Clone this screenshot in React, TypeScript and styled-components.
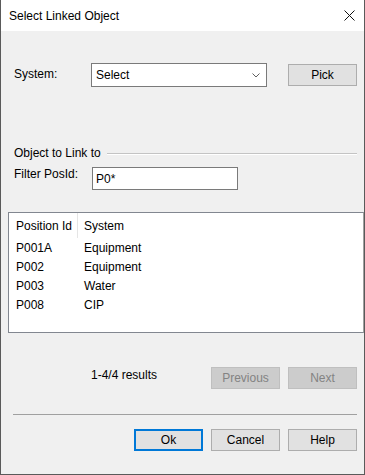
import styled, { createGlobalStyle } from "styled-components";

const GlobalStyle = createGlobalStyle`
  html, body {
    margin: 0;
    padding: 0;
    background: #ffffff;
  }
  * {
    box-sizing: border-box;
  }
`;

// Ventana del diálogo
const Window = styled.div`
  width: 365px;
  height: 475px;
  display: flex;
  flex-direction: column;
  border: 1px solid #5a5a5a;
  border-top: none;
  font-family: "Segoe UI", "Liberation Sans", Arial, sans-serif;
  font-size: 12px;
  color: #000;
  background: #f0f0f0;
`;

const TitleBar = styled.div`
  height: 31px;
  background: #ffffff;
  display: flex;
  align-items: center;
  padding-left: 8px;
  padding-right: 9px;
  font-size: 12px;
`;

const TitleText = styled.span`
  flex: 1;
  padding-top: 1px;
`;

const CloseIcon = () => (
  <svg width="11" height="11" viewBox="0 0 11 11">
    <path d="M0.5 0.5 L10.5 10.5 M10.5 0.5 L0.5 10.5" stroke="#111" strokeWidth="1" fill="none" />
  </svg>
);

const Body = styled.div`
  flex: 1;
  display: flex;
  flex-direction: column;
  padding-top: 32px;
`;

// Filas del formulario
const FormRow = styled.div<{ $top: number }>`
  display: flex;
  align-items: flex-start;
  margin-top: ${(p) => p.$top}px;
  padding: 0 7px 0 13px;
`;

const Label = styled.div<{ $width: number; $pad: number }>`
  width: ${(p) => p.$width}px;
  flex-shrink: 0;
  line-height: 15px;
  padding-top: ${(p) => p.$pad}px;
`;

const ComboBox = styled.div`
  width: 176px;
  height: 24px;
  background: #fff;
  border: 1px solid #7a7a7a;
  display: flex;
  align-items: center;
  padding: 0 6px 0 4px;
`;

const ComboText = styled.span`
  flex: 1;
`;

const Chevron = () => (
  <svg width="8" height="5" viewBox="0 0 8 5">
    <path d="M0.5 0.5 L4 4 L7.5 0.5" stroke="#606060" strokeWidth="1" fill="none" />
  </svg>
);

const TextInput = styled.div`
  width: 146px;
  height: 23px;
  margin-top: 1px;
  background: #fff;
  border: 1px solid #7a7a7a;
  display: flex;
  align-items: center;
  padding-left: 3px;
`;

const Button = styled.button<{ $disabled?: boolean; $default?: boolean }>`
  width: 69px;
  height: 22px;
  padding: 0;
  font-family: inherit;
  font-size: 12px;
  background: ${(p) => (p.$disabled ? "#cccccc" : "#e1e1e1")};
  color: ${(p) => (p.$disabled ? "#838383" : "#000")};
  border: ${(p) => (p.$default ? "2px solid #0078d7" : p.$disabled ? "1px solid #bfbfbf" : "1px solid #adadad")};
  border-radius: 0;
`;

const PickButton = styled(Button)`
  margin-left: auto;
  margin-top: 1px;
`;

// Encabezado de grupo con línea
const GroupHeader = styled.div`
  display: flex;
  align-items: center;
  margin-top: 59px;
  padding: 0 7px 0 13px;
  line-height: 15px;
`;

const GroupLine = styled.div`
  flex: 1;
  margin-left: 6px;
  border-top: 1px solid #c4c4c4;
  border-bottom: 1px solid #ffffff;
`;

// Lista de resultados
const ListBox = styled.div`
  margin: 22px 0 0 7px;
  height: 121px;
  background: #fff;
  border: 1px solid #828790;
  border-right: 1px solid #a0a0a0;
`;

const ListRow = styled.div<{ $header?: boolean }>`
  display: flex;
  height: ${(p) => (p.$header ? 25 : 19)}px;
  align-items: center;
`;

const IdCell = styled.div<{ $header?: boolean }>`
  width: 69px;
  height: 100%;
  display: flex;
  align-items: center;
  padding-left: 7px;
  border-right: 1px solid ${(p) => (p.$header ? "#e5e5e5" : "transparent")};
`;

const SystemCell = styled.div`
  padding-left: 6px;
`;

const ResultsRow = styled.div`
  display: flex;
  align-items: flex-start;
  gap: 8px;
  margin-top: 34px;
  padding: 0 7px 0 90px;
`;

const ResultsText = styled.span`
  line-height: 15px;
  padding-top: 1px;
  margin-right: auto;
`;

const Separator = styled.div`
  margin: 25px 7px 0 12px;
  border-top: 1px solid #a0a0a0;
`;

const FooterRow = styled.div`
  display: flex;
  justify-content: flex-end;
  gap: 8px;
  margin-top: 14px;
  padding-right: 7px;
`;

const rows = [
  { id: "P001A", system: "Equipment" },
  { id: "P002", system: "Equipment" },
  { id: "P003", system: "Water" },
  { id: "P008", system: "CIP" },
];

const App = () => (
  <>
    <GlobalStyle />
    <Window>
      <TitleBar>
        <TitleText>Select Linked Object</TitleText>
        <CloseIcon />
      </TitleBar>
      <Body>
        <FormRow $top={0}>
          <Label $width={77} $pad={4}>System:</Label>
          <ComboBox>
            <ComboText>Select</ComboText>
            <Chevron />
          </ComboBox>
          <PickButton>Pick</PickButton>
        </FormRow>

        <GroupHeader>
          Object to Link to
          <GroupLine />
        </GroupHeader>

        <FormRow $top={5}>
          <Label $width={78} $pad={1}>Filter PosId:</Label>
          <TextInput>P0*</TextInput>
        </FormRow>

        <ListBox>
          <ListRow $header>
            <IdCell $header>Position Id</IdCell>
            <SystemCell>System</SystemCell>
          </ListRow>
          {rows.map((r) => (
            <ListRow key={r.id}>
              <IdCell>{r.id}</IdCell>
              <SystemCell>{r.system}</SystemCell>
            </ListRow>
          ))}
        </ListBox>

        <ResultsRow>
          <ResultsText>1-4/4 results</ResultsText>
          <Button $disabled>Previous</Button>
          <Button $disabled>Next</Button>
        </ResultsRow>

        <Separator />

        <FooterRow>
          <Button $default>Ok</Button>
          <Button>Cancel</Button>
          <Button>Help</Button>
        </FooterRow>
      </Body>
    </Window>
  </>
);

export default App;
